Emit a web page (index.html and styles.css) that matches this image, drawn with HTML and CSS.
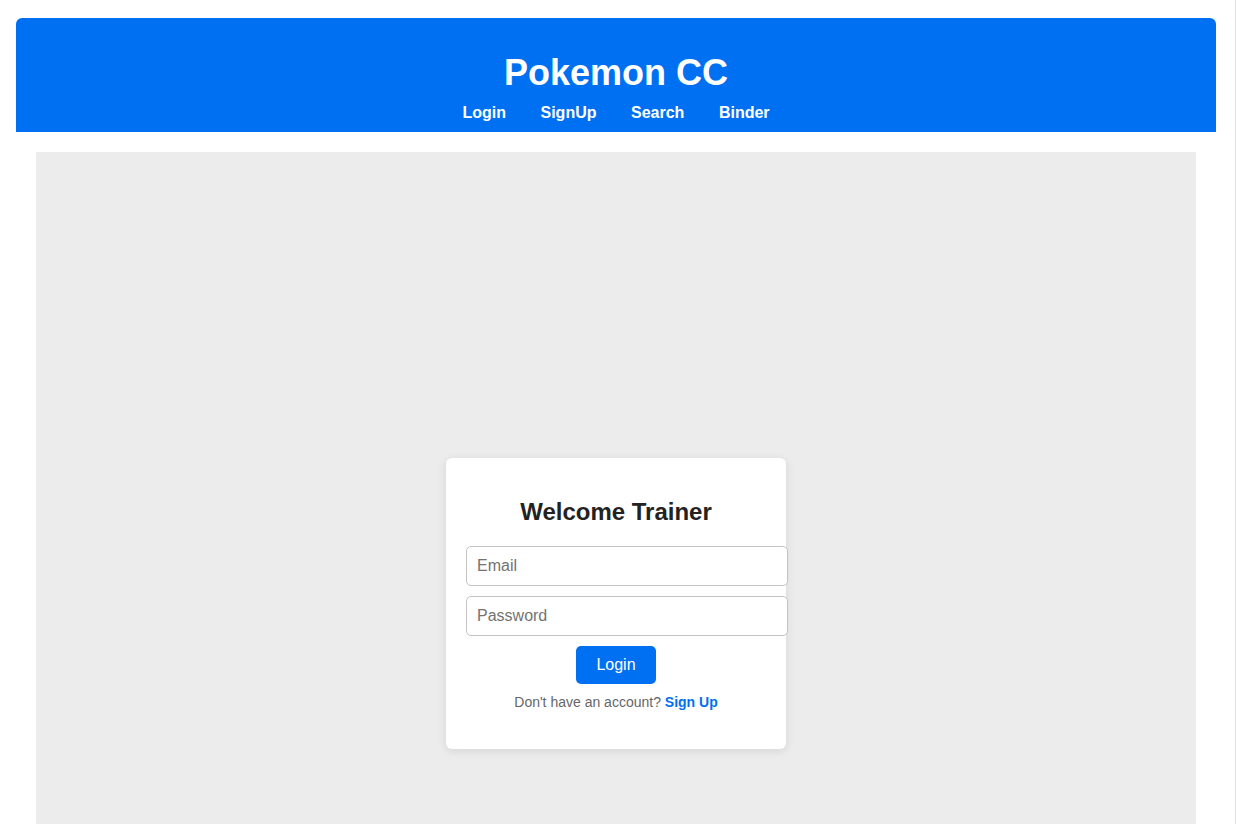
FILE: index.html
```html
<!DOCTYPE html>
<html lang="en">
<head>
<meta charset="utf-8">
<title>Pokemon CC</title>
<link rel="stylesheet" href="styles.css">
</head>
<body>
  <header class="site-header">
    <h1 class="site-title">Pokemon CC</h1>
    <nav class="site-nav">
      <a href="#" class="nav-link">Login</a>
      <a href="#" class="nav-link">SignUp</a>
      <a href="#" class="nav-link">Search</a>
      <a href="#" class="nav-link">Binder</a>
    </nav>
  </header>
  <main class="stage">
    <form class="login-card">
      <h2 class="login-title">Welcome Trainer</h2>
      <input class="field" type="email" placeholder="Email">
      <input class="field" type="password" placeholder="Password">
      <button class="login-btn" type="button">Login</button>
      <p class="signup-note">Don't have an account? <a href="#" class="signup-link">Sign Up</a></p>
    </form>
  </main>
</body>
</html>
```

FILE: styles.css
```css
* {
  box-sizing: content-box;
}

html {
  background: #ffffff;
}

body {
  margin: 0;
  padding: 18px 0 0 16px;
  box-sizing: border-box;
  width: 1236px;
  border-right: 1px solid #e2e2e2;
  font-family: "Liberation Sans", Arial, Helvetica, sans-serif;
  color: #222;
}

.site-header {
  width: 1200px;
  height: 114px;
  box-sizing: border-box;
  padding-top: 34px;
  background: #0070f3;
  border-radius: 6px 6px 0 0;
  color: #ffffff;
  text-align: center;
}

.site-title {
  margin: 0;
  font-size: 36px;
  line-height: 41px;
  font-weight: 700;
}

.site-nav {
  margin-top: 10px;
  display: flex;
  justify-content: center;
  gap: 34.5px;
  line-height: 19px;
}

.nav-link {
  color: #ffffff;
  text-decoration: none;
  font-weight: 700;
  font-size: 16px;
}

.stage {
  margin: 20px 0 0 20px;
  width: 1160px;
  height: 903px;
  background: #ececec;
  display: flex;
  align-items: center;
  justify-content: center;
}

.login-card {
  width: 300px;
  padding: 20px;
  background: #ffffff;
  border-radius: 6px;
  box-shadow: 0 2px 10px rgba(0, 0, 0, 0.1);
  text-align: center;
}

.login-title {
  margin: 20px 0 20px;
  font-size: 24px;
  line-height: 28px;
  font-weight: 700;
  color: #222;
}

.field {
  display: block;
  width: 300px;
  height: 18px;
  padding: 10px;
  margin: 0 0 10px;
  border: 1px solid #c4c4c4;
  border-radius: 5px;
  font-family: "Liberation Sans", Arial, Helvetica, sans-serif;
  font-size: 16px;
  line-height: 18px;
  color: #222;
  background: #fff;
  outline: none;
}

.field::placeholder {
  color: #737373;
}

.login-btn {
  display: inline-block;
  height: 38px;
  padding: 0 20px;
  border: none;
  border-radius: 5px;
  background: #0070f3;
  color: #ffffff;
  font-family: "Liberation Sans", Arial, Helvetica, sans-serif;
  font-size: 16px;
  line-height: 38px;
  cursor: pointer;
}

.signup-note {
  margin: 10px 0 19px;
  font-size: 14px;
  line-height: 16px;
  color: #666;
}

.signup-link {
  color: #0070f3;
  font-weight: 700;
  text-decoration: none;
}
```
